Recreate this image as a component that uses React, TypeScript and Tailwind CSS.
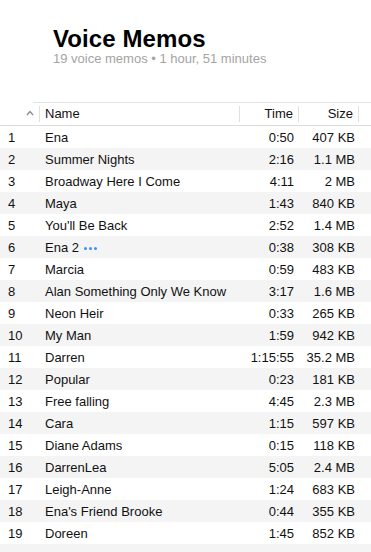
import React from 'react';

const memos: [string, string, string][] = [
  ['Ena', '0:50', '407 KB'],
  ['Summer Nights', '2:16', '1.1 MB'],
  ['Broadway Here I Come', '4:11', '2 MB'],
  ['Maya', '1:43', '840 KB'],
  ["You'll Be Back", '2:52', '1.4 MB'],
  ['Ena 2', '0:38', '308 KB'],
  ['Marcia', '0:59', '483 KB'],
  ['Alan Something Only We Know', '3:17', '1.6 MB'],
  ['Neon Heir', '0:33', '265 KB'],
  ['My Man', '1:59', '942 KB'],
  ['Darren', '1:15:55', '35.2 MB'],
  ['Popular', '0:23', '181 KB'],
  ['Free falling', '4:45', '2.3 MB'],
  ['Cara', '1:15', '597 KB'],
  ['Diane Adams', '0:15', '118 KB'],
  ['DarrenLea', '5:05', '2.4 MB'],
  ['Leigh-Anne', '1:24', '683 KB'],
  ["Ena's Friend Brooke", '0:44', '355 KB'],
  ['Doreen', '1:45', '852 KB'],
];

// colonne: numero | nome | durata | dimensione | resto
const cols = 'grid grid-cols-[40px_200px_59px_60px_1fr]';

export default function App() {
  return (
    <div className="min-h-[552px] bg-white text-[#111] font-['Liberation_Sans',Arial,sans-serif] overflow-hidden">
      <div className="pt-[27px] pl-[53px]">
        <h1 className="text-[24px] leading-[24px] font-bold text-black tracking-[0.1px]">Voice Memos</h1>
        <p className="text-[13px] leading-[16px] text-[#a3a3a3]">19 voice memos • 1 hour, 51 minutes</p>
      </div>

      <div className="mt-[35px] ml-[33px] border-t border-[#e3e3e3]" />
      <div className={`${cols} h-[23px] border-b border-[#dcdcdc] text-[13px] items-center`}>
        <div className="h-[16px] flex items-center justify-end border-r border-[#e0e0e0] pr-[5px]">
          <svg width="8" height="6" viewBox="0 0 8 6" className="-mt-[2px]">
            <polyline points="1,5 4,1.5 7,5" fill="none" stroke="#8a8a8a" strokeWidth="1.3" />
          </svg>
        </div>
        <div className="h-[16px] flex items-center pl-[5px] border-r border-[#e0e0e0]">Name</div>
        <div className="h-[16px] flex items-center justify-end pr-[5px] border-r border-[#e0e0e0]">Time</div>
        <div className="h-[16px] flex items-center justify-end pr-[5px] border-r border-[#e0e0e0]">Size</div>
        <div />
      </div>

      {[...memos, null].map((m, i) => (
        <div
          key={i}
          className={`${cols} h-[22px] text-[13px] leading-[22px] ${i % 2 === 1 ? 'bg-[#f4f4f4]' : 'bg-white'}`}
        >
          {m && (
            <>
              <div className="pl-[8px] pt-[1px]">{i + 1}</div>
              <div className="pl-[5px] pt-[1px] flex items-center whitespace-nowrap">
                {m[0]}
                {m[0] === 'Ena 2' && (
                  <span className="ml-[5px] flex gap-[2px]">
                    <span className="w-[3px] h-[3px] rounded-full bg-[#3d8ef5]" />
                    <span className="w-[3px] h-[3px] rounded-full bg-[#3d8ef5]" />
                    <span className="w-[3px] h-[3px] rounded-full bg-[#3d8ef5]" />
                  </span>
                )}
              </div>
              <div className="text-right pr-[5px] pt-[1px] whitespace-nowrap">{m[1]}</div>
              <div className="text-right pr-[4px] pt-[1px] whitespace-nowrap">{m[2]}</div>
              <div />
            </>
          )}
        </div>
      ))}
    </div>
  );
}
